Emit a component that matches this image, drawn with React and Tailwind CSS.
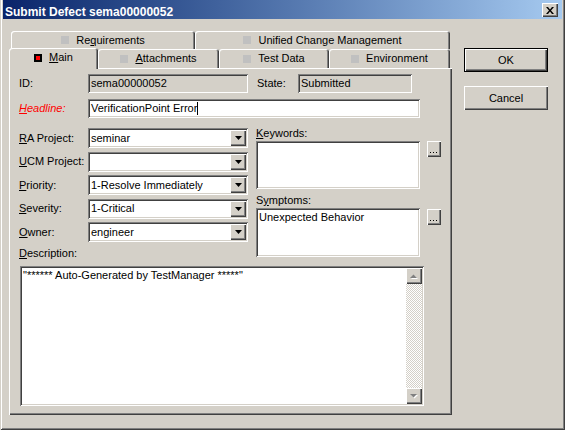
import React from 'react';

const raised = 'shadow-[inset_1px_1px_#fff,inset_-1px_-1px_#404040,inset_-2px_-2px_#808080]';
const sunken = 'shadow-[inset_1px_1px_#808080,inset_-1px_-1px_#fff,inset_2px_2px_#404040,inset_-2px_-2px_#d4d0c8]';
const tabEdge = 'shadow-[inset_1px_1px_#fff,inset_-1px_0_#404040,inset_-2px_0_#808080]';

// label with an underlined access key
const Mn = ({ text, at = -1, className = '' }) => (
  <span className={`whitespace-nowrap ${className}`}>
    {at >= 0 ? (
      <>
        {text.slice(0, at)}
        <u>{text[at]}</u>
        {text.slice(at + 1)}
      </>
    ) : (
      text
    )}
  </span>
);

const Tab = ({ text, at, width, active, top }) => (
  <div
    className={`${width} ${tabEdge} rounded-t-[3px] bg-[#d4d0c8] flex items-center justify-center gap-[7px] ${
      active ? 'h-[21px] relative z-10 pb-[2px]' : top ? 'h-[18px]' : 'h-[19px] mt-[1px]'
    }`}
  >
    {active ? (
      <div className="w-[8px] h-[8px] bg-black p-[2px]">
        <div className="w-full h-full bg-[#ff0000]" />
      </div>
    ) : (
      <div className="w-[8px] h-[8px] bg-[#c0c0c0]" />
    )}
    <Mn text={text} at={at} />
  </div>
);

const Combo = ({ value }) => (
  <div className={`w-[160px] h-[20px] bg-white ${sunken} flex items-center p-[2px]`}>
    <span className="flex-1 pl-[1px] whitespace-nowrap">{value}</span>
    <div className={`w-[16px] h-[16px] bg-[#d4d0c8] ${raised} flex items-center justify-center`}>
      <svg width="7" height="4" viewBox="0 0 7 4">
        <path d="M0 0h7L3.5 4z" fill="#000" />
      </svg>
    </div>
  </div>
);

const Dots = () => (
  <div className={`w-[14px] h-[16px] bg-[#d4d0c8] ${raised} flex items-end justify-center pb-[4px]`}>
    <svg width="8" height="1" viewBox="0 0 8 1">
      <rect x="0" y="0" width="1" height="1" fill="#000" />
      <rect x="3" y="0" width="1" height="1" fill="#000" />
      <rect x="6" y="0" width="1" height="1" fill="#000" />
    </svg>
  </div>
);

const Arrow = ({ up }) => (
  <div className={`w-[16px] h-[16px] bg-[#d4d0c8] ${raised} flex items-center justify-center`}>
    <svg width="8" height="5" viewBox="0 0 8 5">
      {up ? (
        <>
          <path d="M1 5h7L4.5 1.5z" fill="#fff" />
          <path d="M0 4h7L3.5 0.5z" fill="#808080" />
        </>
      ) : (
        <>
          <path d="M1 1h7L4.5 4.5z" fill="#fff" />
          <path d="M0 0h7L3.5 3.5z" fill="#808080" />
        </>
      )}
    </svg>
  </div>
);

const fields = [
  { label: 'RA Project:', at: 0, value: 'seminar' },
  { label: 'UCM Project:', at: 0, value: '' },
  { label: 'Priority:', at: 0, value: '1-Resolve Immediately' },
  { label: 'Severity:', at: 0, value: '1-Critical' },
  { label: 'Owner:', at: 0, value: 'engineer' },
];

export default function App() {
  return (
    <div className="w-[565px] h-[430px] bg-[#d4d0c8] text-black text-[11px] leading-[13px] font-['Liberation_Sans',Arial,sans-serif] shadow-[inset_1px_0_#d4d0c8,inset_-1px_-1px_#404040,inset_2px_0_#fff,inset_-2px_-2px_#808080] px-[3px] overflow-hidden">
      {/* title bar */}
      <div className="h-[19px] flex items-start bg-linear-to-r from-[#0a246a] to-[#a6caf0]">
        <span className="mt-[6px] ml-[2px] leading-[12px] text-[12px] font-bold text-white whitespace-nowrap">
          Submit Defect sema00000052
        </span>
        <div className={`ml-auto mr-[4px] mt-[3px] w-[16px] h-[14px] bg-[#d4d0c8] ${raised} flex items-center justify-center`}>
          <svg width="8" height="7" viewBox="0 0 8 7">
            <path d="M0 0h2l2 2.5L6 0h2L5 3.5 8 7H6L4 4.5 2 7H0l3-3.5z" fill="#000" />
          </svg>
        </div>
      </div>

      <div className="flex pl-[6px] pt-[12px]">
        <div className="w-[443px] flex flex-col">
          {/* tabs */}
          <div className="flex pl-[2px]">
            <Tab text="Requirements" at={2} width="w-[184px]" top />
            <Tab text="Unified Change Management" width="w-[255px]" top />
          </div>
          <div className="flex items-start h-[20px] -mt-[1px]">
            <Tab text="Main" at={0} width="w-[89px]" active />
            <Tab text="Attachments" at={0} width="w-[121px]" />
            <Tab text="Test Data" width="w-[110px]" />
            <Tab text="Environment" width="w-[121px]" />
          </div>

          {/* panel */}
          <div className={`h-[347px] ${raised} pl-[10px] pt-[6px] flex flex-col`}>
            <div className="flex items-center h-[19px]">
              <span className="w-[69px]">ID:</span>
              <div className={`w-[160px] h-[19px] ${sunken} flex items-center pl-[3px]`}>sema00000052</div>
              <span className="ml-[9px] w-[41px]">State:</span>
              <div className={`w-[114px] h-[19px] ${sunken} flex items-center pl-[3px]`}>Submitted</div>
            </div>

            <div className="flex items-center h-[19px] mt-[6px]">
              <Mn text="Headline:" at={0} className="w-[69px] italic text-[#ff0000]" />
              <div className={`w-[332px] h-[19px] bg-white ${sunken} flex items-center pl-[3px]`}>
                VerificationPoint Error
                <div className="w-px h-[13px] bg-black" />
              </div>
            </div>

            <div className="flex items-start mt-[10px]">
              <div className="flex flex-col">
                <div className="flex flex-col gap-[3.5px]">
                  {fields.map(f => (
                    <div key={f.label} className="flex items-center">
                      <Mn text={f.label} at={f.at} className="w-[69px]" />
                      <Combo value={f.value} />
                    </div>
                  ))}
                </div>
                <Mn text="Description:" at={0} className="mt-[4px] h-[14px] leading-[14px]" />
              </div>

              <div className="ml-[8px] flex flex-col">
                <Mn text="Keywords:" at={0} className="h-[11px] leading-[11px]" />
                <div className="flex items-start mt-[2px]">
                  <div className={`w-[164px] h-[48px] bg-white ${sunken}`} />
                  <div className="ml-[7px]">
                    <Dots />
                  </div>
                </div>
                <Mn text="Symptoms:" at={1} className="mt-[6px] h-[11px] leading-[11px]" />
                <div className="flex items-start mt-[2px]">
                  <div className={`w-[164px] h-[49px] bg-white ${sunken} pl-[3px] pt-[3px]`}>Unexpected Behavior</div>
                  <div className="ml-[7px] mt-[1px]">
                    <Dots />
                  </div>
                </div>
              </div>
            </div>

            <div className={`ml-[1px] mt-[6px] w-[404px] h-[140px] bg-white ${sunken} p-[2px] flex`}>
              <div className="flex-1 pl-[1px] pt-[1px] whitespace-nowrap">"****** Auto-Generated by TestManager *****"</div>
              <div className="w-[16px] flex flex-col bg-[repeating-conic-gradient(#fff_0_25%,#d4d0c8_0_50%)] bg-[length:2px_2px]">
                <Arrow up />
                <div className="flex-1" />
                <Arrow />
              </div>
            </div>
          </div>
        </div>

        {/* dialog buttons */}
        <div className="ml-[12px] mt-[17px] flex flex-col gap-[14px]">
          <div className="w-[84px] h-[24px] border border-black">
            <div className={`w-full h-full ${raised} flex items-center justify-center`}>OK</div>
          </div>
          <div className={`w-[84px] h-[24px] ${raised} flex items-center justify-center`}>Cancel</div>
        </div>
      </div>
    </div>
  );
}
